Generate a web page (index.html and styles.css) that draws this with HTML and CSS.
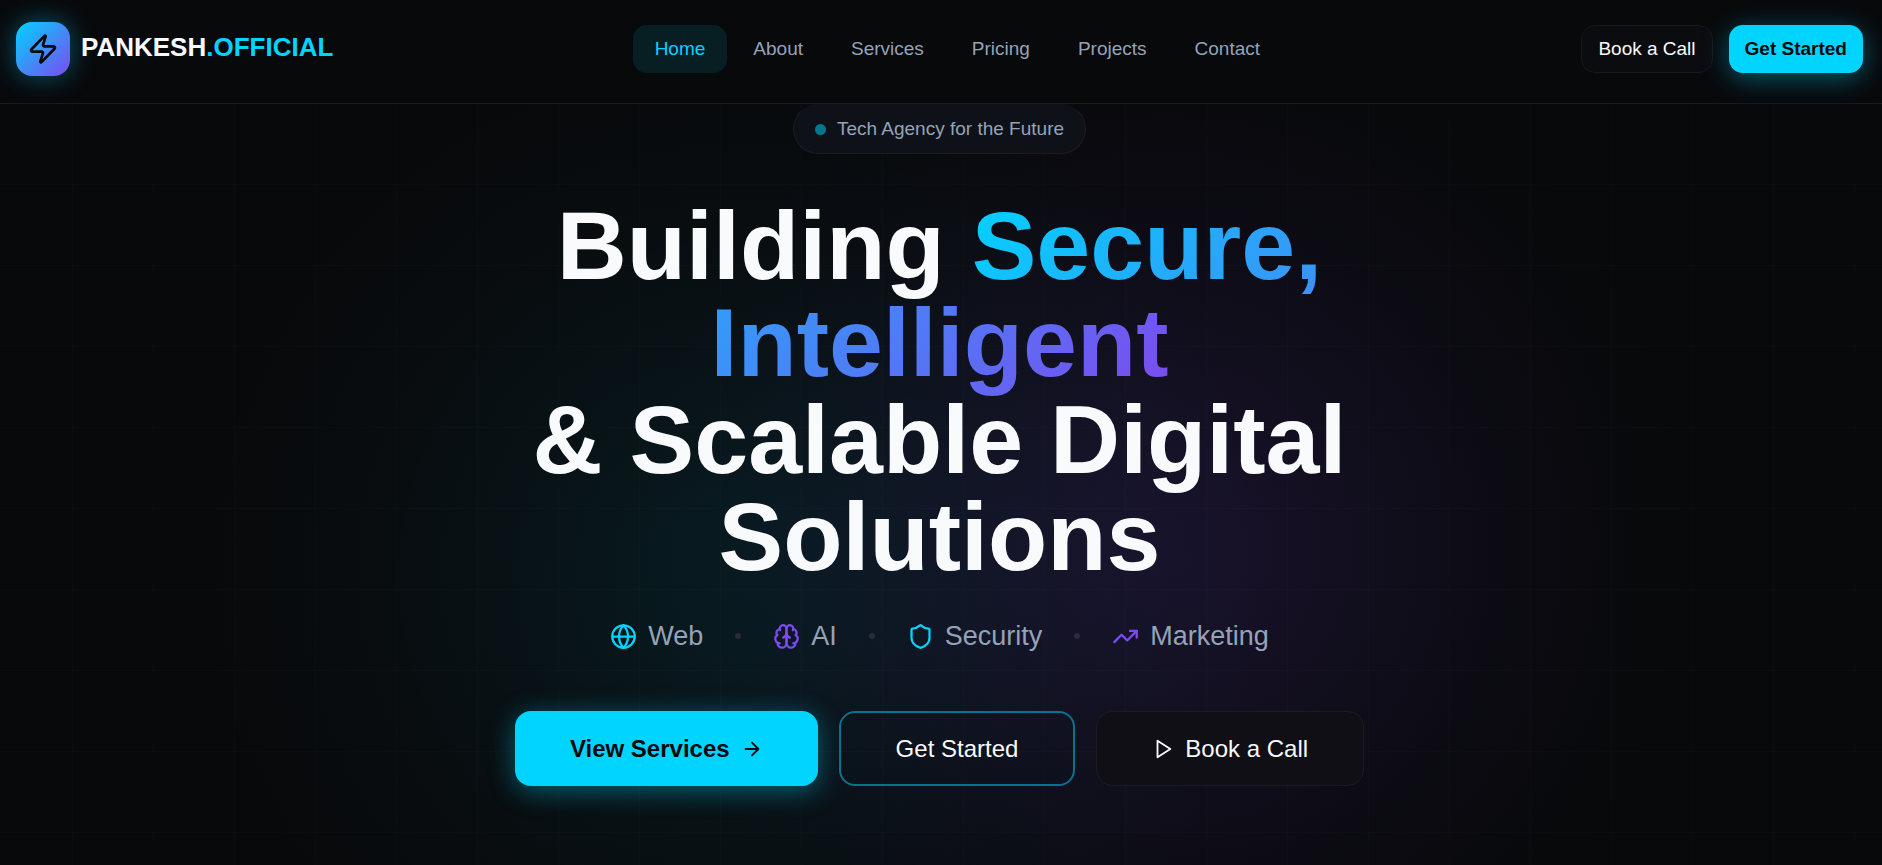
FILE: index.html
```html
<!DOCTYPE html>
<html lang="en">
<head>
<meta charset="utf-8">
<meta name="viewport" content="width=device-width, initial-scale=1">
<title>PANKESH.OFFICIAL</title>
<link rel="stylesheet" href="styles.css">
</head>
<body>
<header class="header">
  <a class="brand" href="#">
    <span class="brand-mark">
      <svg class="icon-brand" viewBox="0 0 24 24" aria-hidden="true"><path d="M4 14a1 1 0 0 1-.78-1.63l9.9-10.2a.5.5 0 0 1 .86.46l-1.92 6.02A1 1 0 0 0 13 10h7a1 1 0 0 1 .78 1.63l-9.9 10.2a.5.5 0 0 1-.86-.46l1.92-6.02A1 1 0 0 0 11 14z"/></svg>
    </span>
    <span class="brand-name">PANKESH<span class="brand-accent">.OFFICIAL</span></span>
  </a>
  <nav class="nav" aria-label="Main">
    <a class="nav-link nav-link-active" href="#">Home</a>
    <a class="nav-link" href="#">About</a>
    <a class="nav-link" href="#">Services</a>
    <a class="nav-link" href="#">Pricing</a>
    <a class="nav-link" href="#">Projects</a>
    <a class="nav-link" href="#">Contact</a>
  </nav>
  <div class="header-actions">
    <button class="btn-small btn-small-ghost" type="button">Book a Call</button>
    <button class="btn-small btn-small-primary" type="button">Get Started</button>
  </div>
</header>
<main class="hero">
  <p class="badge"><span class="badge-dot"></span>Tech Agency for the Future</p>
  <h1 class="title">Building <span class="title-gradient">Secure, Intelligent</span><br>&amp; Scalable Digital Solutions</h1>
  <ul class="topics">
    <li class="topic">
      <svg class="icon-topic cyan" viewBox="0 0 24 24" aria-hidden="true"><circle cx="12" cy="12" r="10"/><path d="M12 2a14.5 14.5 0 0 0 0 20 14.5 14.5 0 0 0 0-20M2 12h20"/></svg>
      Web
    </li>
    <li class="dot" aria-hidden="true"></li>
    <li class="topic">
      <svg class="icon-topic violet" viewBox="0 0 24 24" aria-hidden="true"><path d="M12 5a3 3 0 1 0-5.997.125 4 4 0 0 0-2.526 5.77 4 4 0 0 0 .556 6.588A4 4 0 1 0 12 18Z"/><path d="M12 5a3 3 0 1 1 5.997.125 4 4 0 0 1 2.526 5.77 4 4 0 0 1-.556 6.588A4 4 0 1 1 12 18Z"/><path d="M15 13a4.5 4.5 0 0 1-3-4 4.5 4.5 0 0 1-3 4"/><path d="M17.599 6.5a3 3 0 0 0 .399-1.375M6.003 5.125A3 3 0 0 0 6.401 6.5M3.477 10.896a4 4 0 0 1 .585-.396M19.938 10.5a4 4 0 0 1 .585.396M6 18a4 4 0 0 1-1.967-.516M19.967 17.484A4 4 0 0 1 18 18"/></svg>
      AI
    </li>
    <li class="dot" aria-hidden="true"></li>
    <li class="topic">
      <svg class="icon-topic cyan" viewBox="0 0 24 24" aria-hidden="true"><path d="M20 13c0 5-3.500 7.500-7.660 8.950a1 1 0 0 1-.67-.01C7.500 20.500 4 18 4 13V6a1 1 0 0 1 1-1c2 0 4.500-1.200 6.240-2.720a1.170 1.170 0 0 1 1.520 0C14.510 3.810 17 5 19 5a1 1 0 0 1 1 1z"/></svg>
      Security
    </li>
    <li class="dot" aria-hidden="true"></li>
    <li class="topic">
      <svg class="icon-topic violet" viewBox="0 0 24 24" aria-hidden="true"><path d="M22 7l-8.500 8.500-5-5L2 17"/><path d="M16 7h6v6"/></svg>
      Marketing
    </li>
  </ul>
  <div class="actions">
    <button class="btn btn-primary" type="button">View Services
      <svg class="icon-btn" viewBox="0 0 24 24" aria-hidden="true"><path d="M5 12h14M12 5l7 7-7 7"/></svg>
    </button>
    <button class="btn btn-outline" type="button">Get Started</button>
    <button class="btn btn-ghost" type="button">
      <svg class="icon-btn" viewBox="0 0 24 24" aria-hidden="true"><path d="M6 3l14 9-14 9z"/></svg>
      Book a Call</button>
  </div>
</main>
</body>
</html>
```
FILE: styles.css
```css
:root {
  --bg: #08090b;
  --fg: #f8fafc;
  --muted: #94a3b8;
  --cyan: #00d4ff;
  --violet: #7c4af0;
  --line: #181b20;
}

* {
  box-sizing: border-box;
}

body {
  margin: 0;
  min-height: 100vh;
  display: flex;
  flex-direction: column;
  background: var(--bg);
  color: var(--fg);
  font-family: "Liberation Sans", Arial, sans-serif;
}

button {
  font: inherit;
  cursor: pointer;
}

a {
  color: inherit;
  text-decoration: none;
}

svg {
  flex: none;
  fill: none;
  stroke: currentColor;
  stroke-width: 2;
  stroke-linecap: round;
  stroke-linejoin: round;
}

.header {
  display: flex;
  align-items: center;
  justify-content: space-between;
  padding: 22px 19px 27px 16px;
  border-bottom: 1px solid var(--line);
}

.brand {
  display: flex;
  align-items: center;
  gap: 11px;
}

.brand-mark {
  display: grid;
  place-items: center;
  width: 54px;
  height: 54px;
  border-radius: 16px;
  background: linear-gradient(135deg, var(--cyan), var(--violet));
  box-shadow: 0 0 27px rgba(0, 212, 255, 0.4);
  color: var(--bg);
}

.icon-brand {
  width: 32px;
  height: 32px;
}

.brand-name {
  font-size: 26px;
  font-weight: 700;
  line-height: 36px;
  padding-bottom: 4px;
}

.brand-accent {
  color: var(--cyan);
}

.nav {
  display: flex;
  gap: 4px;
}

.nav-link {
  padding: 0 22px;
  border-radius: 14px;
  color: var(--muted);
  font-size: 19px;
  line-height: 48px;
}

.nav-link-active {
  background: rgba(0, 212, 255, 0.1);
  color: var(--cyan);
}

.header-actions {
  display: flex;
  gap: 16px;
}

.btn-small {
  height: 48px;
  padding: 0 16px;
  border: 1px solid transparent;
  border-radius: 14px;
  font-size: 19px;
}

.btn-small-ghost {
  border-color: #171820;
  background: #0b0c10;
  color: var(--fg);
}

.btn-small-primary {
  border: 0;
  background: var(--cyan);
  color: var(--bg);
  font-weight: 700;
  box-shadow: 0 5px 27px rgba(0, 212, 255, 0.4);
}

.hero {
  flex: 1;
  display: flex;
  flex-direction: column;
  align-items: center;
  padding: 0 3px 78px 0;
  background:
    linear-gradient(to right, rgba(255, 255, 255, 0.012) 1px, transparent 1px) -9px 0 / 81px 81px,
    linear-gradient(to bottom, rgba(255, 255, 255, 0.012) 1px, transparent 1px) 0 -1px / 81px 81px,
    radial-gradient(circle 540px at 62% 58%, rgba(124, 74, 240, 0.13), rgba(124, 74, 240, 0.12) 15%, rgba(124, 74, 240, 0.085) 35%, rgba(124, 74, 240, 0.03) 65%, rgba(124, 74, 240, 0.008) 85%, transparent),
    radial-gradient(circle 540px at 39% 62%, rgba(0, 212, 255, 0.08), rgba(0, 212, 255, 0.074) 15%, rgba(0, 212, 255, 0.05) 35%, rgba(0, 212, 255, 0.02) 65%, rgba(0, 212, 255, 0.006) 85%, transparent);
}

.badge {
  display: flex;
  align-items: center;
  gap: 11px;
  height: 50px;
  margin: 0 0 43px;
  padding: 0 21px;
  border: 1px solid #1b1d26;
  border-top-color: transparent;
  border-radius: 25px;
  background: #0f1118;
  color: var(--muted);
  font-size: 19px;
}

.badge-dot {
  width: 11px;
  height: 11px;
  border-radius: 50%;
  background: #05788f;
}

.title {
  max-width: 1210px;
  margin: 0;
  font-size: 97px;
  font-weight: 700;
  line-height: 97px;
  text-align: center;
}

.title-gradient {
  background: linear-gradient(135deg, var(--cyan), var(--violet));
  background-clip: text;
  -webkit-background-clip: text;
  color: transparent;
}

.topics {
  display: flex;
  align-items: center;
  gap: 32px;
  margin: 32px 0 56px;
  padding: 0;
  list-style: none;
  color: var(--muted);
  font-size: 27px;
  line-height: 38px;
}

.topic {
  display: flex;
  align-items: center;
  gap: 11px;
}

.icon-topic {
  width: 27px;
  height: 27px;
}

.cyan {
  color: var(--cyan);
}

.violet {
  color: var(--violet);
}

.dot {
  width: 6px;
  height: 6px;
  border-radius: 50%;
  background: #262c39;
}

.actions {
  display: flex;
  gap: 21px;
}

.btn {
  display: flex;
  align-items: center;
  gap: 11px;
  height: 75px;
  padding: 0 55px;
  border: 0;
  border-radius: 16px;
  color: var(--fg);
  font-size: 24px;
}

.btn-primary {
  background: var(--cyan);
  color: var(--bg);
  font-weight: 700;
  box-shadow: 0 5px 27px rgba(0, 212, 255, 0.4);
}

.btn-outline {
  border: 2px solid rgba(0, 212, 255, 0.5);
  background: transparent;
}

.btn-ghost {
  border: 1px solid #1a1b23;
  background: #0f0f15;
}

.icon-btn {
  width: 22px;
  height: 22px;
}
```
